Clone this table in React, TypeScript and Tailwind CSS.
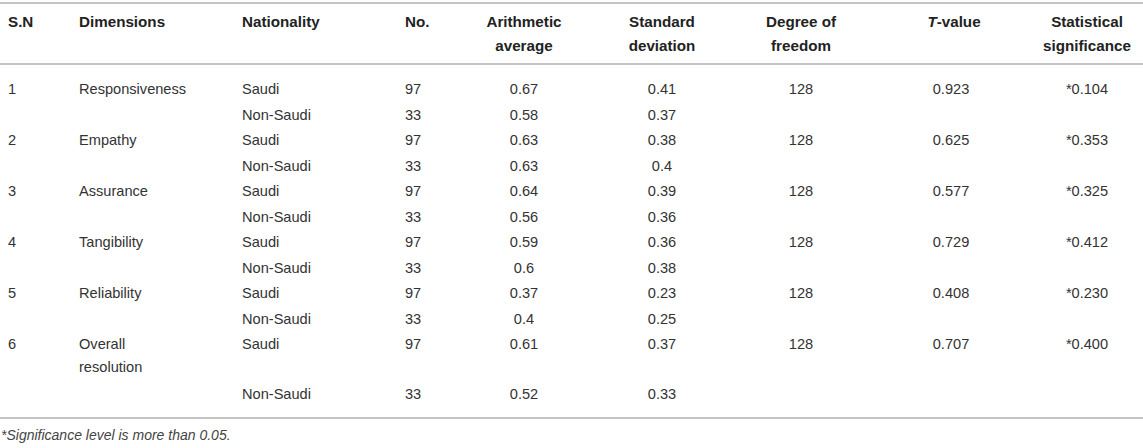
import React from 'react';

interface Group {
	sn: string;
	dimension: React.ReactNode;
	saudi: [string, string, string];
	nonSaudi: [string, string, string];
	df: string;
	t: string;
	sig: string;
}

const groups: Group[] = [
	{ sn: '1', dimension: 'Responsiveness', saudi: ['97', '0.67', '0.41'], nonSaudi: ['33', '0.58', '0.37'], df: '128', t: '0.923', sig: '*0.104' },
	{ sn: '2', dimension: 'Empathy', saudi: ['97', '0.63', '0.38'], nonSaudi: ['33', '0.63', '0.4'], df: '128', t: '0.625', sig: '*0.353' },
	{ sn: '3', dimension: 'Assurance', saudi: ['97', '0.64', '0.39'], nonSaudi: ['33', '0.56', '0.36'], df: '128', t: '0.577', sig: '*0.325' },
	{ sn: '4', dimension: 'Tangibility', saudi: ['97', '0.59', '0.36'], nonSaudi: ['33', '0.6', '0.38'], df: '128', t: '0.729', sig: '*0.412' },
	{ sn: '5', dimension: 'Reliability', saudi: ['97', '0.37', '0.23'], nonSaudi: ['33', '0.4', '0.25'], df: '128', t: '0.408', sig: '*0.230' },
	{ sn: '6', dimension: <>Overall<br />resolution</>, saudi: ['97', '0.61', '0.37'], nonSaudi: ['33', '0.52', '0.33'], df: '128', t: '0.707', sig: '*0.400' },
];

const cell = 'align-top py-[1.25px] leading-[23px]';
const head = 'align-top pt-[6px] pb-[5px] leading-[24px]';

export default function App() {
	return (
		<div className="w-[1143px] bg-white pt-[2px] text-[14.6px] text-[#333]" style={{ fontFamily: '"Liberation Sans", Arial, sans-serif' }}>
			<table className="w-full table-fixed border-collapse">
				<colgroup>
					<col className="w-[71px]" />
					<col className="w-[163px]" />
					<col className="w-[163px]" />
					<col className="w-[58px]" />
					<col className="w-[138px]" />
					<col className="w-[138px]" />
					<col className="w-[140px]" />
					<col className="w-[160px]" />
					<col className="w-[112px]" />
				</colgroup>
				<thead>
					<tr className="border-t-2 border-b-2 border-[#c4c4c4] text-[15.2px] font-bold text-[#222]">
						<th className={`${head} pl-2 text-left`}>S.N</th>
						<th className={`${head} pl-2 text-left`}>Dimensions</th>
						<th className={`${head} pl-2 text-left`}>Nationality</th>
						<th className={`${head} pl-2 text-left`}>No.</th>
						<th className={`${head} text-center`}>Arithmetic<br />average</th>
						<th className={`${head} text-center`}>Standard<br />deviation</th>
						<th className={`${head} text-center`}>Degree of<br />freedom</th>
						<th className={`${head} pl-[6px] text-center`}><i>T</i>-value</th>
						<th className={`${head} text-center`}>Statistical<br />significance</th>
					</tr>
				</thead>
				<tbody className="border-b-2 border-[#c4c4c4]">
					{groups.map((g, i) => {
						const first = i === 0;
						const last = i === groups.length - 1;
						return (
							<React.Fragment key={g.sn}>
								<tr className={first ? '[&>td]:pt-[13px]' : ''}>
									<td className={`${cell} pl-2`}>{g.sn}</td>
									<td className={`${cell} pl-2`}>{g.dimension}</td>
									<td className={`${cell} pl-2`}>Saudi</td>
									<td className={`${cell} pl-2`}>{g.saudi[0]}</td>
									<td className={`${cell} text-center`}>{g.saudi[1]}</td>
									<td className={`${cell} text-center`}>{g.saudi[2]}</td>
									<td className={`${cell} text-center`}>{g.df}</td>
									<td className={`${cell} text-center`}>{g.t}</td>
									<td className={`${cell} text-center`}>{g.sig}</td>
								</tr>
								<tr className={last ? '[&>td]:pt-[2.5px] [&>td]:pb-[11px]' : ''}>
									<td className={cell}></td>
									<td className={cell}></td>
									<td className={`${cell} pl-2`}>Non-Saudi</td>
									<td className={`${cell} pl-2`}>{g.nonSaudi[0]}</td>
									<td className={`${cell} text-center`}>{g.nonSaudi[1]}</td>
									<td className={`${cell} text-center`}>{g.nonSaudi[2]}</td>
									<td className={cell}></td>
									<td className={cell}></td>
									<td className={cell}></td>
								</tr>
							</React.Fragment>
						);
					})}
				</tbody>
			</table>
			<p className="pt-[6px] pl-[1px] text-[14px] italic leading-[20px] text-[#444]">*Significance level is more than 0.05.</p>
		</div>
	);
}
